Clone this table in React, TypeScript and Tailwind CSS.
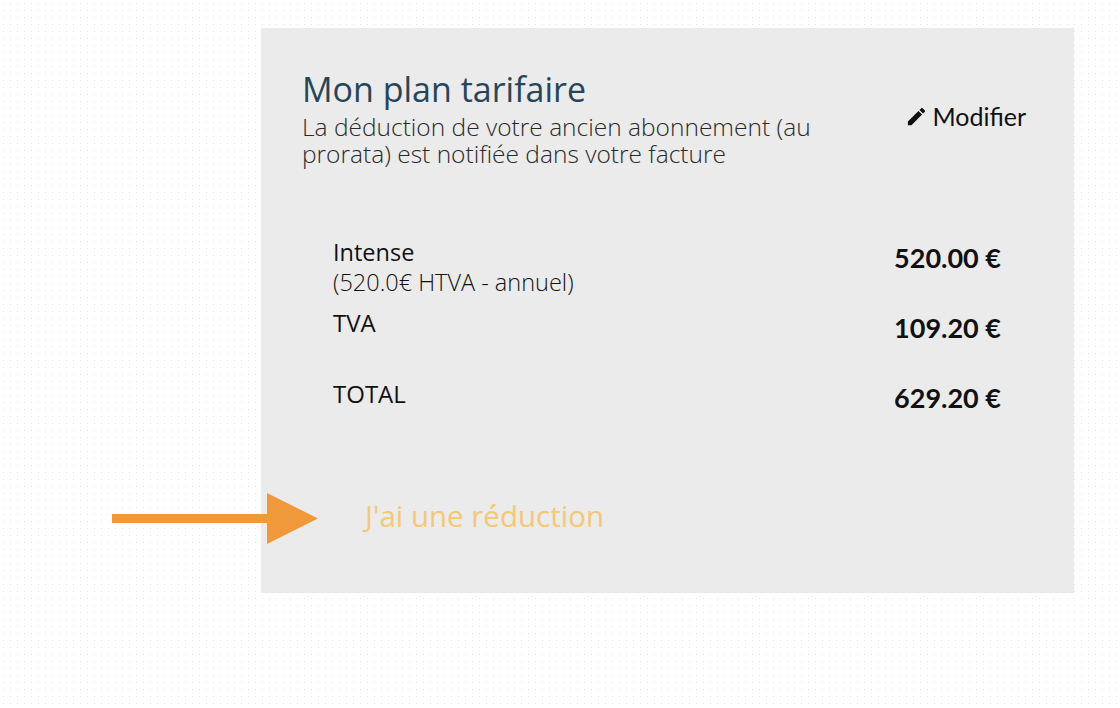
export default function App() {
  return (
    <div className="relative h-[708px] w-full overflow-hidden bg-white bg-[radial-gradient(#e4e4e4_0.6px,transparent_0.8px)] bg-[size:7px_7px] font-['Open_Sans',sans-serif]">
      <div className="ml-[261px] mt-[28px] flex h-[565px] w-[813px] flex-col bg-[#ebebeb] pl-[41px] pr-[48px] pt-[40px]">
        <div className="flex items-start justify-between">
          <div>
            <h2 className="text-[34px] leading-[42px] text-[#264559]">Mon plan tarifaire</h2>
            <p className="mt-[3px] w-[540px] text-[24.5px] font-light leading-[27px] text-[#2a2a2a]">
              La déduction de votre ancien abonnement (au prorata) est notifiée dans votre facture
            </p>
          </div>
          <button className="mt-[30px] flex items-center gap-[4px] font-['Lato',sans-serif] text-[25px] text-[#111]">
            <svg viewBox="0 0 24 24" className="h-[23px] w-[23px]" fill="currentColor">
              <path d="M3 17.25V21h3.75L17.81 9.94l-3.75-3.75L3 17.25zM20.71 7.04a1 1 0 0 0 0-1.41l-2.34-2.34a1 1 0 0 0-1.41 0l-1.83 1.83 3.75 3.75 1.83-1.83z" />
            </svg>
            Modifier
          </button>
        </div>

        <div className="mt-[70px] flex flex-col pl-[31px] pr-[25px] text-[#111]">
          <div className="flex justify-between">
            <div className="text-[23.5px] font-light leading-[30px]">
              <div className="font-normal">Intense</div>
              <div>(520.0€ HTVA - annuel)</div>
            </div>
            <div className="pt-[7px] font-['Lato',sans-serif] text-[27px] font-bold leading-[27px]">520.00 €</div>
          </div>
          <div className="mt-[11px] flex justify-between">
            <div className="text-[24px] leading-[29px]">TVA</div>
            <div className="pt-[6px] font-['Lato',sans-serif] text-[27px] font-bold leading-[27px]">109.20 €</div>
          </div>
          <div className="mt-[38px] flex justify-between">
            <div className="text-[24px] leading-[29px]">TOTAL</div>
            <div className="pt-[5px] font-['Lato',sans-serif] text-[27px] font-bold leading-[27px]">629.20 €</div>
          </div>
        </div>

        <div className="mt-[87px] pl-[63px] text-[29.5px] leading-[36px] text-[#f4c874]">J'ai une réduction</div>
      </div>

      <svg className="absolute left-[112px] top-[493px]" width="206" height="51" viewBox="0 0 206 51">
        <rect x="0" y="21" width="160" height="9" fill="#f0993a" />
        <polygon points="155,0 206,25.5 155,51" fill="#f0993a" />
      </svg>
    </div>
  );
}
